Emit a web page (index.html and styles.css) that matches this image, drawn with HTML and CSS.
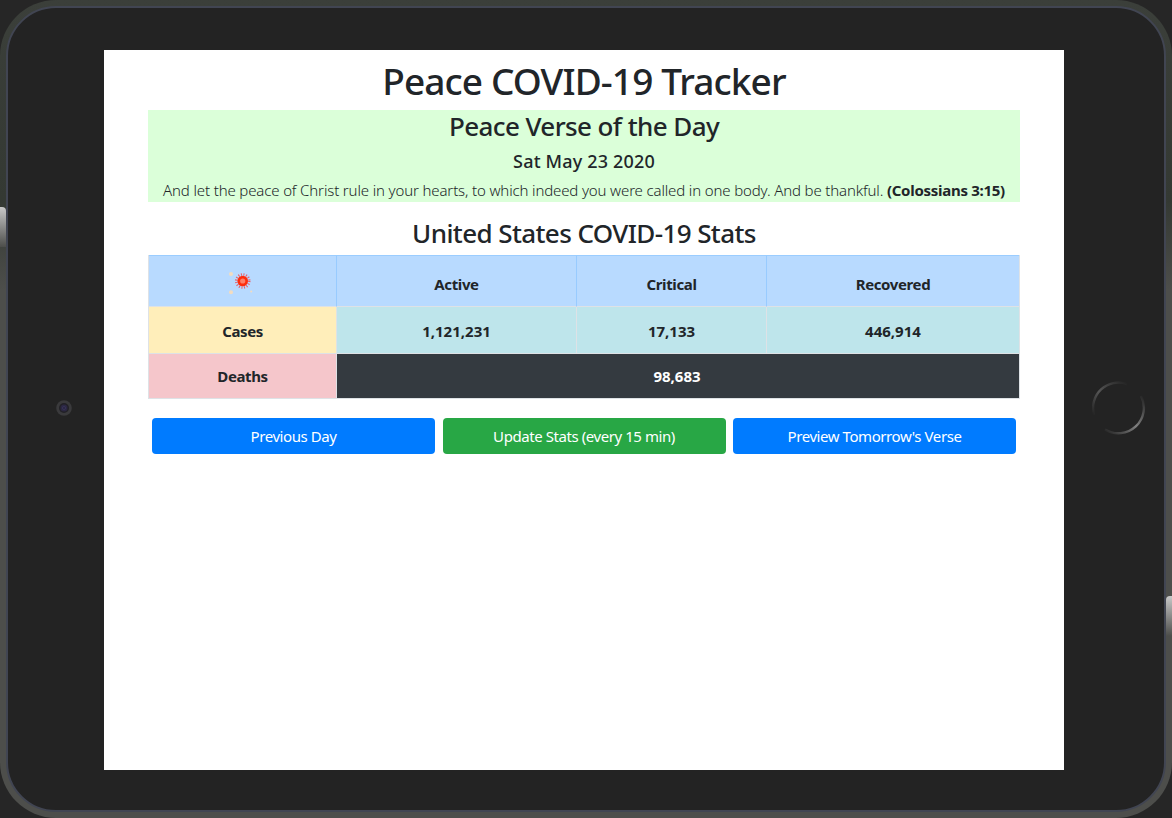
FILE: index.html
```html
<!DOCTYPE html>
<html lang="en">
<head>
<meta charset="utf-8">
<title>Peace COVID-19 Tracker</title>
<link rel="stylesheet" href="styles.css">
</head>
<body>
<div class="tablet">
  <span class="side-light side-light-left"></span>
  <span class="side-light side-light-right"></span>
  <div class="bezel">
    <div class="bezel-side bezel-left">
      <svg class="camera" width="16" height="16" viewBox="0 0 16 16"><circle cx="8" cy="8" r="7.8" fill="#3a3a3c"/><circle cx="8" cy="8" r="5" fill="#222126"/><circle cx="8" cy="8" r="3.5" fill="#2b2742"/><circle cx="8" cy="8" r="1.8" fill="#3c3760"/><circle cx="8" cy="8" r=".8" fill="#171522"/></svg>
    </div>
    <main class="screen">
      <h1 class="title">Peace COVID-19 Tracker</h1>
      <section class="verse">
        <h2 class="heading verse-heading">Peace Verse of the Day</h2>
        <h3 class="date">Sat May 23 2020</h3>
        <p class="text"><span class="passage">And let the peace of Christ rule in your hearts, to which indeed you were called in one body. And be thankful.</span> <b class="citation">(Colossians 3:15)</b></p>
      </section>
      <h2 class="heading stats-heading">United States COVID-19 Stats</h2>
      <div class="stats">
        <div class="cell head"><svg class="virus" width="26" height="26" viewBox="0 0 26 26"><g fill="#f3dcc0"><circle cx="4" cy="5" r="2"/><circle cx="4" cy="23.2" r="2"/><circle cx="24.2" cy="22.5" r="1"/></g><circle cx="15.7" cy="12" r="6.5" fill="none" stroke="#e8606a" stroke-width="2.6" stroke-dasharray="1 1.55"/><circle cx="15.7" cy="12" r="5.3" fill="#ff2d0c"/><circle cx="15.7" cy="12" r="2.6" fill="#ff8068"/></svg></div>
        <div class="cell head">Active</div>
        <div class="cell head">Critical</div>
        <div class="cell head">Recovered</div>
        <div class="cell cases">Cases</div>
        <div class="cell value">1,121,231</div>
        <div class="cell value">17,133</div>
        <div class="cell value">446,914</div>
        <div class="cell deaths">Deaths</div>
        <div class="cell total">98,683</div>
      </div>
      <div class="actions">
        <button class="btn blue">Previous Day</button>
        <button class="btn green">Update Stats (every 15 min)</button>
        <button class="btn blue">Preview Tomorrow's Verse</button>
      </div>
    </main>
    <div class="bezel-side bezel-right">
      <svg class="home" width="54" height="54" viewBox="0 0 54 54" fill="none" stroke-width="2.4"><defs><linearGradient id="a" x1="0" y1="1" x2="1" y2="0"><stop offset="0" stop-color="#555" stop-opacity="0"/><stop offset=".45" stop-color="#555"/><stop offset="1" stop-color="#555" stop-opacity="0"/></linearGradient><linearGradient id="b" x1="0" y1="1" x2="1" y2="0"><stop offset="0" stop-color="#808080" stop-opacity="0"/><stop offset=".5" stop-color="#808080"/><stop offset="1" stop-color="#808080" stop-opacity="0"/></linearGradient></defs><path d="M2 34A25.5 25.5 0 0 1 35 3" stroke="url(#a)"/><path d="M13 48.5A25.5 25.5 0 0 0 49 15" stroke="url(#b)"/></svg>
    </div>
  </div>
</div>
</body>
</html>
```
FILE: styles.css
```css
* { box-sizing: border-box; }
body { margin: 0; background: #262626; color: #212529; font-family: "Noto Sans", "Open Sans", sans-serif; font-size: 15px; }
h1, h2, h3, p { margin: 0; font-weight: 500; text-align: center; white-space: nowrap; }
.tablet { position: relative; width: 1172px; height: 818px; padding: 6px 6px 6px 6px; border-radius: 56px; overflow: hidden; background: linear-gradient(#3b3f3a 0, #343933 200px, #4d4e4b 290px, #4d4e4b 100%); }
.side-light { position: absolute; width: 6px; height: 40px; background: linear-gradient(#c8c8c8, #4d4e4b); }
.side-light-left { left: 0; top: 207px; border-radius: 0 4px 0 0; }
.side-light-right { right: 0; top: 596px; border-radius: 4px 0 0 0; }
.bezel { position: relative; height: 100%; display: flex; border: 2px solid #414552; border-radius: 50px; background: #232323; padding: 42px 0 0; }
.bezel-left { width: 96px; padding: 350px 0 0 48px; }
.bezel-right { flex: 1; padding: 331px 0 0 28px; }
.bezel-side svg { display: block; }
.screen { width: 960px; height: 720px; padding: 6px 44px 0; background: #fff; }
.title { height: 54px; line-height: 50px; font-size: 37px; letter-spacing: -.88px; }
.verse { height: 92px; background: #dbffd9; }
.heading { font-size: 26px; line-height: 33px; letter-spacing: -.6px; }
.verse-heading { height: 38px; }
.date { height: 30px; font-size: 18px; line-height: 27px; letter-spacing: .17px; }
.text { font-size: 15px; line-height: 25px; font-weight: 300; letter-spacing: -.14px; }
.citation { font-weight: 700; letter-spacing: -.28px; }
.stats-heading { margin-top: 15px; height: 38px; }
.stats { display: grid; grid-template-columns: 188px 240px 190px 1fr; grid-template-rows: 52px 47px 45px; border-left: 1px solid #dee2e6; border-right: 1px solid #dee2e6; }
.cell { display: flex; align-items: center; justify-content: center; font-weight: 700; letter-spacing: -.38px; border-right: 1px solid #dee2e6; border-bottom: 1px solid #dee2e6; }
.cell:nth-child(4n) { border-right: 0; }
.head { background: #b8daff; border-right-color: #98cbff; border-top: 1px solid #9bcdff; padding-top: 5px; }
.virus { margin: -3px 0 0 -6px; }
.cases { background: #ffeeba; padding-top: 2px; }
.value { background: #bee5eb; padding-top: 2px; letter-spacing: 0; }
.deaths { background: #f5c6cb; }
.total { grid-column: span 3; background: #343a40; color: #fff; border-right: 0; letter-spacing: 0; padding-right: 2px; }
.actions { display: grid; grid-template-columns: repeat(3, 1fr); gap: 7.5px; padding: 19px 4px 0; }
.btn { height: 36px; padding: 0; border: 0; border-radius: 4px; color: #fff; font: 15px "Noto Sans", sans-serif; letter-spacing: -.43px; }
.blue { background: #007bff; }
.green { background: #28a745; }
```
